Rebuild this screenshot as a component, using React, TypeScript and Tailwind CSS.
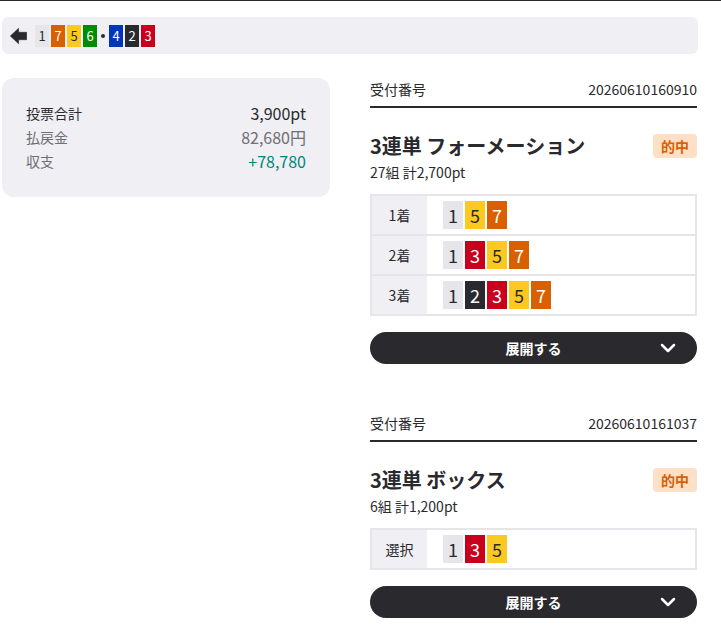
import React from "react";

const COLORS: Record<number, string> = {
  1: "bg-[#e5e5ea] text-[#2a2a2e]",
  2: "bg-[#2a2a2e] text-white",
  3: "bg-[#c8001e] text-white",
  4: "bg-[#0037b8] text-white",
  5: "bg-[#fcc921] text-[#2a2a2e]",
  6: "bg-[#008c00] text-white",
  7: "bg-[#d96000] text-white",
};

function SmallBox({ n }: { n: number }) {
  return (
    <div className={`w-[14px] h-[22px] flex items-center justify-center text-[13px] leading-none ${COLORS[n]}`}>
      {n}
    </div>
  );
}

function BigBox({ n }: { n: number }) {
  return (
    <div className={`w-[20px] h-[28px] flex items-center justify-center text-[18px] leading-none ${COLORS[n]}`}>
      {n}
    </div>
  );
}

function Chevron() {
  return (
    <svg width="16" height="10" viewBox="0 0 16 10" fill="none">
      <polyline points="2,2 8,8 14,2" stroke="white" strokeWidth="2.5" strokeLinecap="round" strokeLinejoin="round" />
    </svg>
  );
}

function Ticket({
  no,
  title,
  sub,
  rows,
}: {
  no: string;
  title: string;
  sub: string;
  rows: { label: string; nums: number[] }[];
}) {
  return (
    <div className="flex flex-col">
      <div className="flex justify-between text-[14px] leading-[20px] pb-[7px] border-b-2 border-[#2a2a2e] text-[#2a2a2e]">
        <span>受付番号</span>
        <span>{no}</span>
      </div>
      <div className="mt-[24px] flex items-center justify-between h-[28px]">
        <span className="text-[20px] font-bold leading-[28px] text-[#2a2a2e]">{title}</span>
        <span className="h-[24px] px-[8px] rounded-[4px] bg-[#ffdfc6] text-[#d96000] font-bold text-[14px] leading-[24px]">的中</span>
      </div>
      <div className="mt-[2px] text-[14px] leading-[20px] text-[#2a2a2e]">{sub}</div>
      <div className="mt-[12px] border-2 border-[#e5e5ea] flex flex-col">
        {rows.map((r, i) => (
          <div key={i} className={`flex ${i > 0 ? "h-[40px] border-t-2 border-[#e5e5ea]" : "h-[38px]"}`}>
            <div className="w-[55px] bg-[#efeff4] flex items-center justify-center text-[14px] text-[#2a2a2e]">
              {r.label}
            </div>
            <div className="flex-1 flex items-center gap-[2px] pl-[16px] bg-white">
              {r.nums.map((n) => (
                <BigBox key={n} n={n} />
              ))}
            </div>
          </div>
        ))}
      </div>
      <div className="mt-[16px] relative h-[32px] rounded-full bg-[#2a2a2e] flex items-center justify-center">
        <span className="text-white font-bold text-[14px]">展開する</span>
        <span className="absolute right-[21px] top-[11px]">
          <Chevron />
        </span>
      </div>
    </div>
  );
}

export default function App() {
  return (
    <div
      className="w-[721px] h-[643px] bg-white border-t border-[#2a2a2e] overflow-hidden"
      style={{ fontFamily: "'Noto Sans CJK JP', 'Noto Sans', sans-serif" }}
    >
      <div className="ml-[2px] w-[696px] mt-[16px] h-[37px] rounded-[6px] bg-[#efeff4] flex items-center pl-[8px]">
        <svg width="17" height="16" viewBox="0 0 17 16" className="mr-[8px]">
          <path
            d="M0.3 8 L8.6 0.3 L8.6 4.3 L16.7 4.3 L16.7 11.7 L8.6 11.7 L8.6 15.7 Z"
            fill="#2a2a2e"
            stroke="#2a2a2e"
            strokeWidth="0.6"
            strokeLinejoin="round"
          />
        </svg>
        <div className="flex items-center gap-[2px]">
          <SmallBox n={1} />
          <SmallBox n={7} />
          <SmallBox n={5} />
          <SmallBox n={6} />
          <div className="w-[8px] flex justify-center">
            <div className="w-[4px] h-[4px] rounded-full bg-[#2a2a2e]" />
          </div>
          <SmallBox n={4} />
          <SmallBox n={2} />
          <SmallBox n={3} />
        </div>
      </div>
      <div className="flex mt-[24px] ml-[2px]">
        <div className="w-[328px] self-start rounded-[12px] bg-[#efeff4] px-[24px] pt-[23px] pb-[24px]">
          <div className="flex justify-between items-center h-[24px]">
            <span className="text-[14px] text-[#2a2a2e]">投票合計</span>
            <span className="text-[16px] text-[#2a2a2e]">3,900pt</span>
          </div>
          <div className="flex justify-between items-center h-[24px]">
            <span className="text-[14px] text-[#6e6e73]">払戻金</span>
            <span className="text-[16px] text-[#6e6e73]">82,680円</span>
          </div>
          <div className="flex justify-between items-center h-[24px]">
            <span className="text-[14px] text-[#6e6e73]">収支</span>
            <span className="text-[16px] text-[#00857a]">+78,780</span>
          </div>
        </div>
        <div className="ml-[40px] w-[327px] flex flex-col gap-[49px] pt-[1px]">
          <Ticket
            no="20260610160910"
            title="3連単 フォーメーション"
            sub="27組 計2,700pt"
            rows={[
              { label: "1着", nums: [1, 5, 7] },
              { label: "2着", nums: [1, 3, 5, 7] },
              { label: "3着", nums: [1, 2, 3, 5, 7] },
            ]}
          />
          <Ticket
            no="20260610161037"
            title="3連単 ボックス"
            sub="6組 計1,200pt"
            rows={[{ label: "選択", nums: [1, 3, 5] }]}
          />
        </div>
      </div>
    </div>
  );
}
